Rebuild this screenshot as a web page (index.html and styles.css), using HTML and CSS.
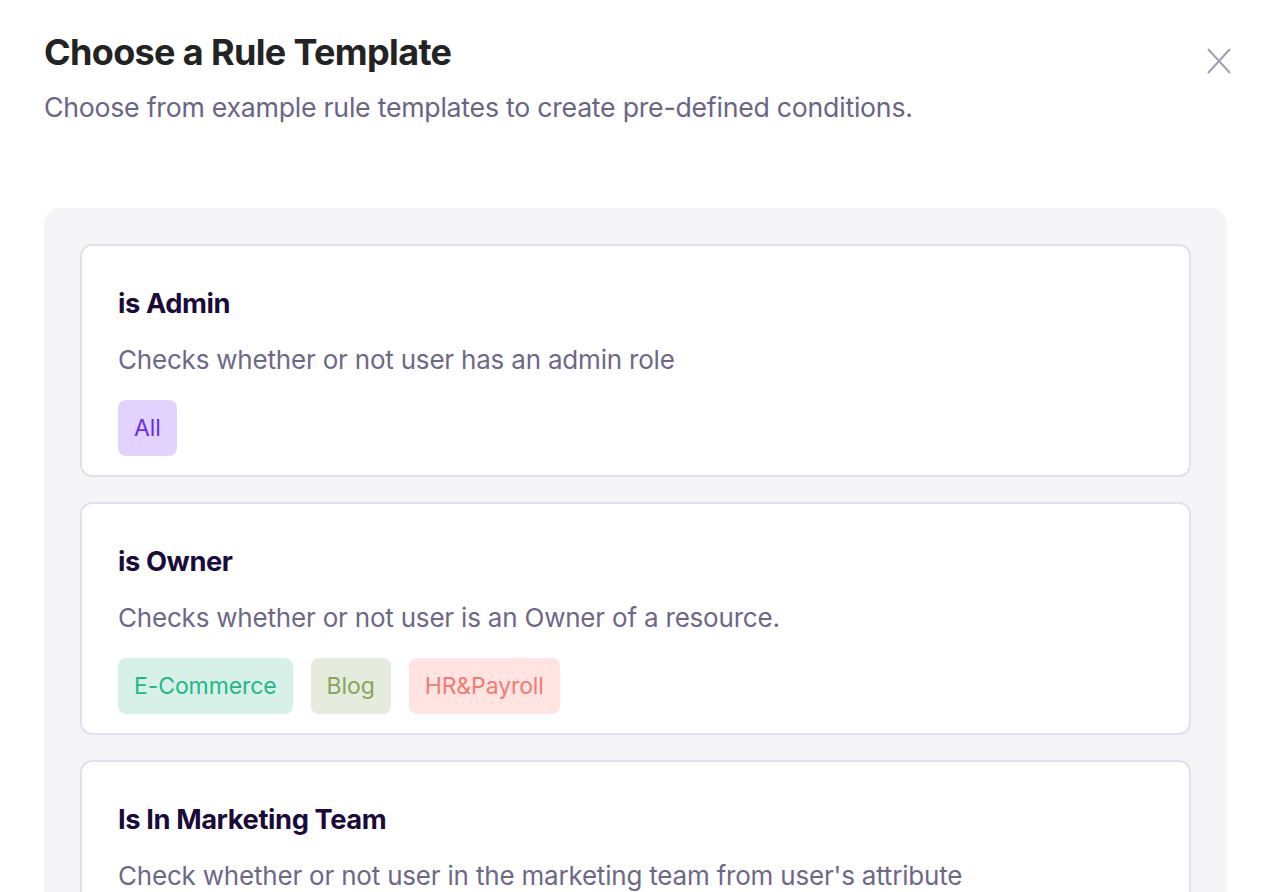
FILE: index.html
```html
<!DOCTYPE html>
<html>
<head>
<meta charset="utf-8">
<link rel="stylesheet" href="styles.css">
</head>
<body>
<div class="modal">
  <header class="head">
    <div class="head-text">
      <h1 class="title">Choose a Rule Template</h1>
      <p class="subtitle">Choose from example rule templates to create pre-defined conditions.</p>
    </div>
    <button class="close" aria-label="Close">
      <svg width="24" height="26" viewBox="0 0 24 26"><path d="M1 1 L23 25 M23 1 L1 25" stroke="#a39db4" stroke-width="2" fill="none"/></svg>
    </button>
  </header>
  <section class="panel">
    <article class="card">
      <h2 class="card-title">is Admin</h2>
      <p class="card-desc">Checks whether or not user has an admin role</p>
      <div class="tags"><span class="tag tag-all">All</span></div>
    </article>
    <article class="card">
      <h2 class="card-title">is Owner</h2>
      <p class="card-desc">Checks whether or not user is an Owner of a resource.</p>
      <div class="tags">
        <span class="tag tag-ecom">E-Commerce</span>
        <span class="tag tag-blog">Blog</span>
        <span class="tag tag-hr">HR&amp;Payroll</span>
      </div>
    </article>
    <article class="card">
      <h2 class="card-title">Is In Marketing Team</h2>
      <p class="card-desc">Check whether or not user in the marketing team from user's attribute</p>
    </article>
  </section>
</div>
</body>
</html>
```
FILE: styles.css
```css
html, body {
  margin: 0;
  padding: 0;
  background: #ffffff;
  height: 892px;
  overflow: hidden;
}
body {
  font-family: Inter, "Noto Sans", sans-serif;
}
.modal {
  padding: 30px 35px 0 44px;
}
.head {
  display: flex;
  justify-content: space-between;
  align-items: flex-start;
}
.title {
  margin: 0;
  font-size: 36px;
  line-height: 44px;
  font-weight: 700;
  color: #232323;
  letter-spacing: -0.65px;
}
.subtitle {
  margin: 16px 0 0;
  font-size: 26.7px;
  line-height: 34px;
  color: #6b6585;
  letter-spacing: -0.25px;
}
.close {
  border: 0;
  background: none;
  padding: 0;
  margin-top: 18px;
  cursor: pointer;
  line-height: 0;
}
.panel {
  margin-top: 84px;
  margin-right: 4px;
  background: #f5f5f8;
  border-radius: 16px;
  padding: 36px 36px 0;
  display: flex;
  flex-direction: column;
  gap: 25px;
}
.card {
  background: #ffffff;
  border: 2px solid #e2e0ec;
  border-radius: 12px;
  padding: 40px 36px 19px;
}
.card-title {
  margin: 0;
  font-size: 27.3px;
  line-height: 36px;
  font-weight: 700;
  color: #1a0b3b;
  letter-spacing: -0.4px;
}
.card-desc {
  margin: 22px 0 0;
  font-size: 26px;
  line-height: 32px;
  color: #6e6888;
  letter-spacing: -0.2px;
}
.tags {
  display: flex;
  gap: 18px;
  margin-top: 24px;
}
.tag {
  display: inline-flex;
  align-items: center;
  height: 56px;
  padding: 0 16px;
  border-radius: 8px;
  font-size: 23px;
  letter-spacing: -0.1px;
}
.tag-all { background: #e1d3fd; color: #6b2cf0; }
.tag-ecom { background: #d7f0e8; color: #1fb88a; }
.tag-blog { background: #e5ecdd; color: #86a55a; }
.tag-hr { background: #ffe4e2; color: #f07c75; }
```
